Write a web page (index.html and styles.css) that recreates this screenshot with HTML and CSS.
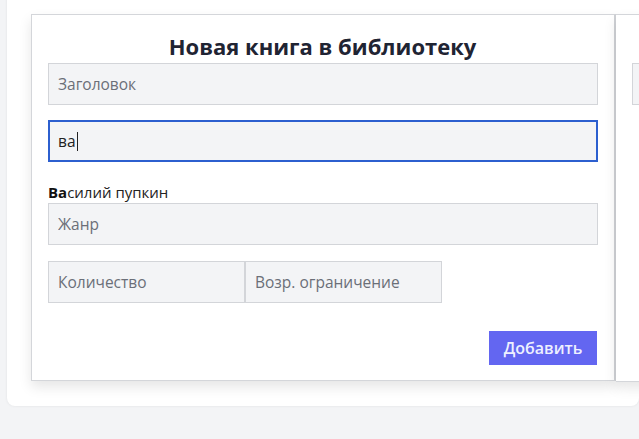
FILE: index.html
```html
<!DOCTYPE html>
<html lang="ru">
<head>
<meta charset="utf-8">
<title>Новая книга</title>
<link rel="stylesheet" href="styles.css">
</head>
<body>
<div class="shell">
  <div class="cards">
    <section class="card">
      <h1 class="title">Новая книга в библиотеку</h1>
      <input class="field" type="text" placeholder="Заголовок">
      <div class="field focused" role="textbox"><span>ва</span><span class="caret"></span></div>
      <div class="suggest"><b>Ва</b>силий пупкин</div>
      <input class="field genre" type="text" placeholder="Жанр">
      <div class="pair">
        <input class="field half" type="text" placeholder="Количество">
        <input class="field half" type="text" placeholder="Возр. ограничение">
      </div>
      <div class="actions"><button class="btn" type="button">Добавить</button></div>
    </section>
    <section class="card second">
      <div class="spacer"></div>
      <input class="field" type="text" placeholder="">
    </section>
  </div>
</div>
</body>
</html>
```
FILE: styles.css
```css
* { box-sizing: border-box; }
html, body { margin: 0; padding: 0; }
body {
  background: #f3f4f6;
  font-family: "Open Sans", "Noto Sans", sans-serif;
  color: #1f2937;
  overflow: hidden;
  width: 639px;
  height: 439px;
}
.shell {
  margin: -10px 0 0 7px;
  background: #fff;
  border-radius: 8px;
  padding: 24px 0 24px 24px;
  box-shadow: 0 0 3px rgba(0,0,0,0.08);
  overflow: hidden;
}
.cards {
  display: flex;
  align-items: flex-start;
}
.card {
  flex: 0 0 585px;
  width: 585px;
  background: #fff;
  border: 1px solid #d4d6da;
  border-right: 2px solid #cfd1d5;
  padding: 16px 17px 15px 16px;
  box-shadow: 0 6px 12px rgba(0,0,0,0.10);
  display: flex;
  flex-direction: column;
}
.card.second {
  border-left: none;
  height: 368px;
}
.spacer { height: 32px; }
.title {
  margin: 0 0 2px 0;
  font-size: 22px;
  line-height: 30px;
  font-weight: 700;
  text-align: center;
  color: #1f2433;
}
.field {
  display: flex;
  align-items: center;
  width: 550px;
  height: 42px;
  padding: 0 9px;
  background: #f3f4f6;
  border: 1px solid #d3d5d9;
  border-radius: 0;
  font-family: inherit;
  font-size: 15.5px;
  color: #222;
  outline: none;
}
.field::placeholder { color: #6b6f78; }
.focused {
  margin-top: 15px;
  border: 2px solid #2c5fcf;
  padding: 0 8px;
  color: #222;
}
.caret {
  display: inline-block;
  width: 1px;
  height: 19px;
  background: #222;
  margin-left: 1px;
}
.suggest {
  margin-top: 19px;
  font-size: 15px;
  line-height: 22px;
  color: #222;
  height: 22px;
}
.suggest b { font-weight: 700; color: #111; }
.genre { margin-top: 0; }
.pair {
  display: flex;
  margin-top: 16px;
}
.half { width: 197px; }
.actions {
  display: flex;
  justify-content: flex-end;
  margin-top: 28px;
}
.btn {
  width: 108px;
  height: 34px;
  border: none;
  background: #6366f1;
  color: #eef0ff;
  font-family: inherit;
  font-size: 16px;
  font-weight: 600;
}
```
